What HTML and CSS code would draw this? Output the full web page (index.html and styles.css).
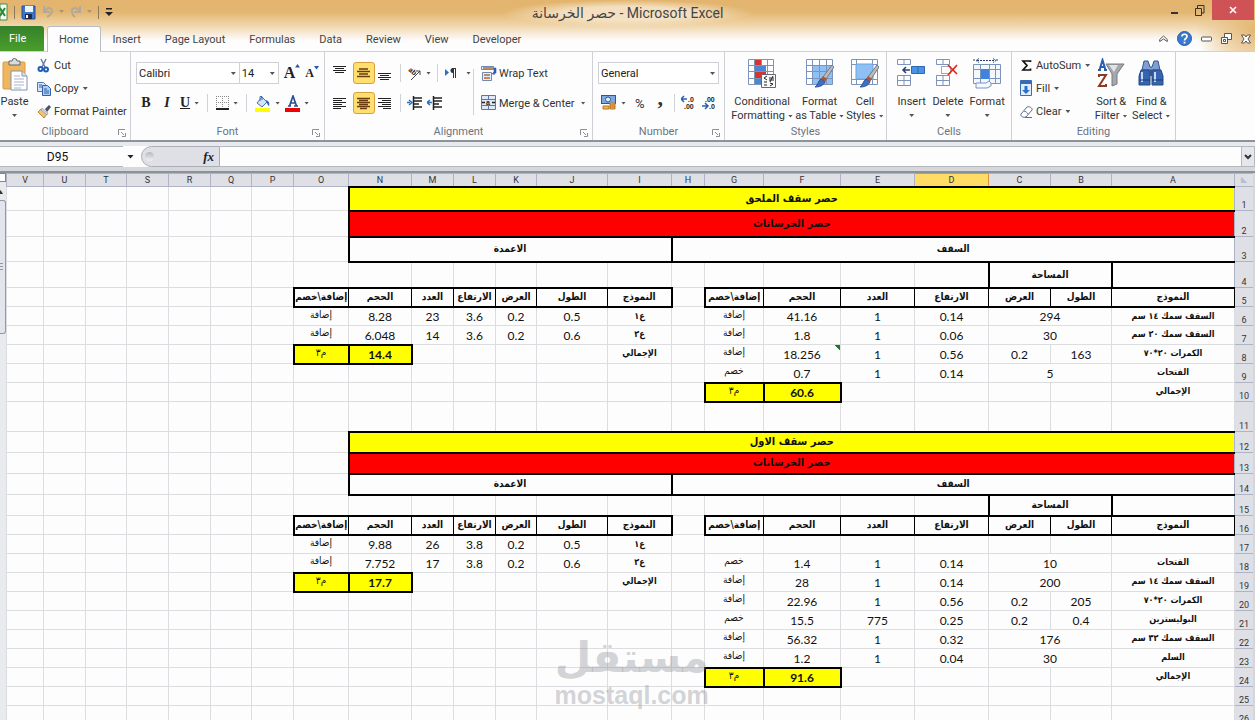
FILE: index.html
```html
<!DOCTYPE html>
<html lang="en">
<head>
<meta charset="utf-8">
<title>حصر الخرسانة - Microsoft Excel</title>
<link rel="stylesheet" href="styles.css">
</head>
<body>
<div class="app">
  <header class="titlebar">
    <div class="quick">
      <svg class="logo" width="8" height="18" viewBox="0 0 8 18"><path d="M0 1h7v16H0z" fill="#fff" stroke="#3f8f3c"/><path d="M0 5l5 8M5 5l-5 8" stroke="#2c8a33" stroke-width="2"/></svg>
      <i class="qsep"></i>
      <button class="qbtn" aria-label="Save"><svg width="15" height="15" viewBox="0 0 15 15"><path d="M1 1h13v13H2l-1-1z" fill="#3f73c4" stroke="#27509a"/><path d="M4 1h8v6H4z" fill="#eaf2fc"/><path d="M4 9h7v5H4z" fill="#1d2b46"/><path d="M5 10h2v3H5z" fill="#fff"/></svg></button>
      <button class="qbtn" aria-label="Undo"><svg width="22" height="14" viewBox="0 0 22 14"><path d="M2 1v6h6M3 6c3-5 8-3 7 1-1 3-3 4-5 5" fill="none" stroke="#b3a999" stroke-width="2"/><path d="M17 5h5l-2.500 3z" fill="#a79579"/></svg></button>
      <button class="qbtn" aria-label="Redo"><svg width="22" height="14" viewBox="0 0 22 14"><path d="M10 1v6H4M9 6C6 1 1 3 2 7c0 3 2 4 3 5" fill="none" stroke="#b3a999" stroke-width="2"/><path d="M17 5h5l-2.500 3z" fill="#a79579"/></svg></button>
      <i class="qsep"></i>
      <button class="qbtn" aria-label="Customize toolbar"><svg width="8" height="8" viewBox="0 0 8 8"><path d="M1 0h6v1.500H1zM0 4h8L4 8z" fill="#222"/></svg></button>
    </div>
    <h1 class="title"><bdi>حصر الخرسانة</bdi> - Microsoft Excel</h1>
    <div class="winbtns">
      <button aria-label="Minimize"><svg width="8" height="10" viewBox="0 0 8 10"><path d="M0 7h7v2H0z" fill="#333"/></svg></button>
      <button aria-label="Restore"><svg width="10" height="11" viewBox="0 0 10 11"><path d="M.5 3.500h6v7h-6zM2.500 3V.5h6.500v7.500H7" fill="none" stroke="#333"/></svg></button>
      <button class="close" aria-label="Close"><svg width="8" height="8" viewBox="0 0 8 8"><path d="M1 1l6 6M7 1L1 7" stroke="#fff" stroke-width="1.600"/></svg></button>
    </div>
  </header>

  <nav class="tabs">
    <button class="tab file">File</button>
    <button class="tab active">Home</button>
    <button class="tab">Insert</button>
    <button class="tab">Page Layout</button>
    <button class="tab">Formulas</button>
    <button class="tab">Data</button>
    <button class="tab">Review</button>
    <button class="tab">View</button>
    <button class="tab">Developer</button>
    <div class="docbtns">
      <button aria-label="Minimize ribbon"><svg width="9" height="8" viewBox="0 0 9 8"><path d="M.7 4.500L4.500 1l3.800 3.500v2L4.500 4 .7 6.500z" fill="#fff" stroke="#555"/></svg></button>
      <button aria-label="Help"><svg width="15" height="17" viewBox="0 0 15 17"><circle cx="7.500" cy="8.500" r="7" fill="#3879cf" stroke="#2a5ba8"/><path d="M5 6.500c0-3 5-3 5 0 0 2-2.500 2-2.500 4" fill="none" stroke="#fff" stroke-width="1.700"/><path d="M6.600 11.700h1.800v1.800H6.600z" fill="#fff"/></svg></button>
      <button aria-label="Minimize workbook"><svg width="11" height="6" viewBox="0 0 11 6"><rect x=".5" y="1" width="10" height="4" rx="1" fill="#fff" stroke="#555"/></svg></button>
      <button aria-label="Restore workbook"><svg width="11" height="11" viewBox="0 0 11 11"><path d="M3.500.5h7v6h-7z" fill="#fff" stroke="#555"/><path d="M.5 4.500h6v6h-6z" fill="#fff" stroke="#555"/><path d="M2.500 6.500h2v2h-2z" fill="#fff" stroke="#555"/></svg></button>
      <button aria-label="Close workbook"><svg width="10" height="10" viewBox="0 0 10 10"><path d="M.5 1h3L5 3l1.500-2h3L7 5l2.500 4h-3L5 7 3.500 9h-3L3 5z" fill="#fff" stroke="#555"/></svg></button>
    </div>
  </nav>

  <section class="ribbon">
    <div class="group clipboard">
      <div class="body">
        <button class="big paste"><svg width="26" height="33" viewBox="0 0 26 33"><rect x="1" y="4" width="22" height="27" rx="1" fill="#efb660" stroke="#d79a43"/><path d="M7 3h3a2.500 2.500 0 0 1 5 0h3v4H7z" fill="#d9dbde" stroke="#666"/><path d="M9 13h11l5 5v14H9z" fill="#fff" stroke="#7f93b4"/><path d="M20 13v5h5" fill="#dbe4f1" stroke="#7f93b4"/><path d="M12 18h6M12 21h10M12 24h10M12 27h10M12 30h7" stroke="#a7b4ca"/></svg><span>Paste</span><i class="dd"></i></button>
        <div class="stack">
          <button><svg width="14" height="15" viewBox="0 0 14 15"><path d="M4 1l4 8M9 1L5 9" stroke="#6d7f9c" stroke-width="1.500"/><circle cx="3.500" cy="11" r="2" fill="none" stroke="#1f5eb5" stroke-width="2"/><circle cx="9" cy="11.500" r="2" fill="none" stroke="#1f5eb5" stroke-width="2"/></svg>Cut</button>
          <button><svg width="14" height="15" viewBox="0 0 14 15"><path d="M.5 1.500h6l2 2v7h-8z" fill="#d5e5fa" stroke="#4b79b9"/><path d="M5.500 4.500h5l3 3v7h-8z" fill="#aecdf3" stroke="#2f61a8"/><path d="M7 8h3M7 10h5M7 12h5M2 4h3M2 6h3" stroke="#2f61a8"/></svg>Copy<i class="dd"></i></button>
          <button><svg width="14" height="15" viewBox="0 0 14 15"><path d="M8 5l4-4 2 2-4 5z" fill="#47536b"/><path d="M4 5l6 5-3 4-6-6z" fill="#f0c477" stroke="#bd8a35"/><path d="M5 4l6 5-1 2-6-5z" fill="#cfd3da" stroke="#7d818a" stroke-width=".5"/></svg>Format Painter</button>
        </div>
      </div>
      <div class="label">Clipboard<svg class="launch" width="8" height="8" viewBox="0 0 8 8"><path d="M.5 6V.5H7M3 3l3 3M7.500 4v3.500H4" fill="none" stroke="#8a8f98"/></svg></div>
    </div>

    <div class="group font">
      <div class="body rows">
        <div class="row">
          <label class="pick face"><select aria-label="Font"><option>Calibri</option></select><i class="dd"></i></label><label class="pick size"><select aria-label="Font size"><option>14</option></select><i class="dd"></i></label>
          <button class="serif grow" aria-label="Grow font">A<svg width="5" height="4" viewBox="0 0 5 4"><path d="M0 3.500L2.500 0 5 3.500z" fill="#2a56a5"/></svg></button>
          <button class="serif shrink" aria-label="Shrink font">A<svg width="5" height="4" viewBox="0 0 5 4"><path d="M0 0h5L2.500 3.500z" fill="#2a56a5"/></svg></button>
        </div>
        <div class="row second">
          <button class="serif glyph"><b>B</b></button>
          <button class="serif glyph"><b><em>I</em></b></button>
          <button class="serif glyph"><b><u>U</u></b><i class="dd"></i></button>
          <i class="vsep"></i>
          <button class="ic" aria-label="Borders"><svg width="13" height="14" viewBox="0 0 13 14"><path d="M.5 0v12M6.500 0v12M12.500 0v12M0 .5h13M0 6.500h13" stroke="#888" stroke-dasharray="1 1"/><path d="M0 13h13" stroke="#222" stroke-width="2"/></svg><i class="dd"></i></button>
          <i class="vsep"></i>
          <button class="ic" aria-label="Fill color"><svg width="16" height="17" viewBox="0 0 16 17"><path d="M7 2l5 5-5 5-5-4z" fill="#d4e3f7" stroke="#466fab"/><path d="M5 6V1.500h2V5" fill="none" stroke="#466fab"/><path d="M11 5c3 1 4 3 3 6-2-1-1-3-3-3z" fill="#2d66b8"/><path d="M0 13h15v4H0z" fill="#ff0"/></svg><i class="dd"></i></button>
          <button class="ic" aria-label="Font color"><svg width="15" height="17" viewBox="0 0 15 17"><path d="M3 11h3M9 11h4M4.500 11L8 1l3.500 10M5.500 8h5" fill="none" stroke="#2d4f8f" stroke-width="1.700"/><path d="M0 13h15v4H0z" fill="#f00000"/></svg><i class="dd"></i></button>
        </div>
      </div>
      <div class="label">Font<svg class="launch" width="8" height="8" viewBox="0 0 8 8"><path d="M.5 6V.5H7M3 3l3 3M7.500 4v3.500H4" fill="none" stroke="#8a8f98"/></svg></div>
    </div>

    <div class="group align">
      <div class="body cols">
        <div class="rows">
          <div class="row">
            <button class="sq" aria-label="Top align"><svg width="14" height="16" viewBox="0 0 14 16"><path d="M0 1.500h13M2 3.500h9M0 5.500h13M2 7.500h9" stroke="#222"/></svg></button>
            <button class="sq on" aria-label="Middle align"><svg width="14" height="12" viewBox="0 0 14 12"><path d="M2 2h9M0 4.500h13M2 7h9M0 9.500h13" stroke="#6b3c10" stroke-width="1.500"/></svg></button>
            <button class="sq" aria-label="Bottom align"><svg width="14" height="16" viewBox="0 0 14 16"><path d="M0 8.500h13M2 10.500h9M0 12.500h13M2 14.500h9" stroke="#222"/></svg></button>
            <i class="vsep"></i>
            <button class="ic" aria-label="Orientation"><svg width="15" height="15" viewBox="0 0 15 15"><text x="0" y="7" class="tiny" transform="rotate(40 4 7)">ab</text><path d="M4 14l9-9M13 5v4M13 5H9" stroke="#444" fill="none"/></svg><i class="dd"></i></button>
            <i class="vsep"></i>
            <button class="ic" aria-label="Text direction"><svg width="14" height="12" viewBox="0 0 14 12"><path d="M1 2v7l4-3.500z" fill="#2c6dc4"/><path d="M9 1a2.200 2.200 0 0 0 0 5z" fill="#333"/><path d="M12 1.500H8.500M9.500 1v10M11.500 1v10" stroke="#333" fill="none"/></svg><i class="dd wide"></i></button>
          </div>
          <div class="row second">
            <button class="sq" aria-label="Align left"><svg width="14" height="13" viewBox="0 0 14 13"><path d="M0 1.500h13M0 3.500h9M0 5.500h13M0 7.500h9M0 9.500h13M0 11.500h8" stroke="#222"/></svg></button>
            <button class="sq on" aria-label="Center"><svg width="14" height="13" viewBox="0 0 14 13"><path d="M0 1.500h13M2 3.500h9M0 5.500h13M2 7.500h9M0 9.500h13M3 11.500h7" stroke="#6b3c10" stroke-width="1.300"/></svg></button>
            <button class="sq" aria-label="Align right"><svg width="14" height="13" viewBox="0 0 14 13"><path d="M0 1.500h13M4 3.500h9M0 5.500h13M4 7.500h9M0 9.500h13M5 11.500h8" stroke="#222"/></svg></button>
            <i class="vsep"></i>
            <button class="ic" aria-label="Decrease indent"><svg width="15" height="14" viewBox="0 0 15 14"><path d="M6 2h9M7 5h8M7 8h5M6 11h9M6.500 0v14" stroke="#222" stroke-width="1.500"/><path d="M0 6.500h3M2 4l3 2.500L2 9" fill="none" stroke="#2c6dc4" stroke-width="1.500"/></svg></button>
            <button class="ic" aria-label="Increase indent"><svg width="15" height="14" viewBox="0 0 15 14"><path d="M6 2h9M7 5h8M7 8h5M6 11h9M6.500 0v14" stroke="#222" stroke-width="1.500"/><path d="M5 6.500H1M3 4L0 6.500 3 9" fill="none" stroke="#2c6dc4" stroke-width="1.500"/></svg></button>
          </div>
        </div>
        <i class="vsep tall"></i>
        <div class="rows">
          <div class="row"><button class="txt"><svg width="16" height="16" viewBox="0 0 16 16"><path d="M.5 1.500h12v3H.5zM1.500 7.500h9v8h-9z" fill="#e6eefb" stroke="#7088b4"/><path d="M2 3h10M3 10h6M3 13h6" stroke="#b36b2c" stroke-width="1.500"/><path d="M13 3h2v5l-4 1 2-2v3z" fill="#2c5fae" stroke="#2c5fae" stroke-width=".6"/></svg>Wrap Text</button></div>
          <div class="row second"><button class="txt"><svg width="16" height="16" viewBox="0 0 16 16"><path d="M.5.500h14v14H.5zM.5 4.500h14M.5 10.500h14M7.500 0v4M7.500 11v4" fill="#dfe9f8" stroke="#5d76a6"/><path d="M1 7.500h3M11 7.500h3" stroke="#222" stroke-width="1.500"/><text x="5" y="10" class="tiny">a</text></svg>Merge &amp; Center<i class="dd"></i></button></div>
        </div>
      </div>
      <div class="label">Alignment<svg class="launch" width="8" height="8" viewBox="0 0 8 8"><path d="M.5 6V.5H7M3 3l3 3M7.500 4v3.500H4" fill="none" stroke="#8a8f98"/></svg></div>
    </div>

    <div class="group number">
      <div class="body rows">
        <div class="row"><label class="pick fmt"><select aria-label="Number format"><option>General</option></select><i class="dd"></i></label></div>
        <div class="row second">
          <button class="ic" aria-label="Accounting format"><svg width="16" height="16" viewBox="0 0 16 16"><rect x=".5" y=".5" width="14" height="8" fill="#7ea8e0" stroke="#2b57a0"/><circle cx="7" cy="4.500" r="2.500" fill="#e3eefb" stroke="#2b57a0"/><path d="M9 8h5v6H9zM2 11h6v3H2z" fill="#eeb45b" stroke="#b97722"/><path d="M9 10h5M9 12h5" stroke="#b97722"/></svg><i class="dd"></i></button>
          <button class="pct">%</button>
          <button class="comma">,</button>
          <i class="vsep"></i>
          <button class="dec" aria-label="Increase decimal"><svg width="15" height="18" viewBox="0 0 15 18"><path d="M6 5H1M3 2L0 5l3 3" stroke="#2c5fae" stroke-width="1.500" fill="none"/><text x="7" y="8" class="tiny">.0</text><text x="3" y="15" class="tiny">.00</text></svg></button>
          <button class="dec" aria-label="Decrease decimal"><svg width="15" height="18" viewBox="0 0 15 18"><path d="M0 12h5M3 9l3 3-3 3" stroke="#2c5fae" stroke-width="1.500" fill="none"/><text x="3" y="8" class="tiny">.00</text><text x="7" y="15" class="tiny">.0</text></svg></button>
        </div>
      </div>
      <div class="label">Number<svg class="launch" width="8" height="8" viewBox="0 0 8 8"><path d="M.5 6V.5H7M3 3l3 3M7.500 4v3.500H4" fill="none" stroke="#8a8f98"/></svg></div>
    </div>

    <div class="group styles">
      <div class="body bigs">
        <button class="big"><svg width="28" height="31" viewBox="0 0 28 31"><path d="M.5 1.500h25v25H.5zM.5 7.500h25M.5 13.500h25M.5 20.500h25M6.500 1v25M13.500 1v25M19.500 1v25" fill="#fff" stroke="#7c93bd"/><path d="M7 2h6v5H7zM7 14h11v6H7z" fill="#d8342b"/><path d="M7 8h11v5H7zM7 21h6v5H7z" fill="#4b86d2"/><path d="M13.500 16.500h14v13h-14z" fill="#fafafa" stroke="#667"/><path d="M19 18l-3 2 3 2M16 24h3M21 20h5M21 22h5M25 18l-3 6M22 25l3 1-3 2M16 27h3" fill="none" stroke="#222"/></svg><span>Conditional<br>Formatting<i class="dd"></i></span></button>
        <button class="big"><svg width="29" height="31" viewBox="0 0 29 31"><path d="M1.500 1.500h26v25h-26z" fill="#fff"/><path d="M8 8h19v18H8z" fill="#8fc0f3"/><path d="M1.500 1.500h26v25h-26zM1.500 7.500h26M1.500 13.500h26M1.500 20.500h26M7.500 1v25M14.500 1v25M21.500 1v25" fill="none" stroke="#7c93bd"/><path d="M27 7l2 2-8 12-3-2z" fill="#b9bcc3" stroke="#777"/><path d="M18 18l4 3-2 3-4-3z" fill="#b5562a"/><path d="M16 21l4 3c-2 4-6 5-10 5 3-2 3-6 6-8z" fill="#3f6fc0" stroke="#2f559c"/></svg><span>Format<br>as Table<i class="dd"></i></span></button>
        <button class="big"><svg width="29" height="31" viewBox="0 0 29 31"><path d="M1.500 1.500h26v25h-26zM1.500 6.500h26M1.500 21.500h26M6.500 1v25M22.500 1v25" fill="#fff" stroke="#7c93bd"/><path d="M6 6h17v15H6z" fill="#8fc0f3" stroke="#6ba3e2"/><path d="M27 7l2 2-8 12-3-2z" fill="#b9bcc3" stroke="#777"/><path d="M18 18l4 3-2 3-4-3z" fill="#b5562a"/><path d="M16 21l4 3c-2 4-6 5-10 5 3-2 3-6 6-8z" fill="#3f6fc0" stroke="#2f559c"/></svg><span>Cell<br>Styles<i class="dd"></i></span></button>
      </div>
      <div class="label">Styles</div>
    </div>

    <div class="group cells">
      <div class="body bigs">
        <button class="big"><svg width="29" height="31" viewBox="0 0 29 31"><path d="M.5 1.500h13v5H.5zM7 1v5M.5 17.500h13v10H.5zM7 17v10M.5 22.500h13" fill="#fff" stroke="#7c93bd"/><path d="M14.500 8.500h13v7h-13zM21 8v7" fill="#4b93e4" stroke="#2f66b3"/><path d="M13 12H7M9 9l-3 3 3 3" fill="none" stroke="#27406d" stroke-width="1.500"/></svg><span>Insert</span><i class="dd"></i></button>
        <button class="big"><svg width="29" height="31" viewBox="0 0 29 31"><path d="M3.500 1.500h13v5h-13zM10 1v5M3.500 17.500h13v10h-13zM10 17v10M3.500 22.500h13" fill="#fff" stroke="#7c93bd"/><path d="M8.500 8.500h9v7h-9z" fill="none" stroke="#555" stroke-dasharray="1 1"/><path d="M15 7l9 9M24 7l-9 10" stroke="#e0271c" stroke-width="1.700"/></svg><span>Delete</span><i class="dd"></i></button>
        <button class="big"><svg width="29" height="31" viewBox="0 0 29 31"><path d="M1 1v3M24 1v3M4 2.500h18M6 .5L3 2.500l3 2M20 .5l3 2-3 2" fill="none" stroke="#27406d" stroke-dasharray="2 1"/><path d="M.5 6.500h27v19H.5zM.5 11.500h27M.5 20.500h27M7.500 6v19M16.500 6v19M22.500 6v19" fill="#f4f7fc" stroke="#7c93bd"/><path d="M8 11h8v10H8z" fill="#3f83dc"/><path d="M3 25h10l3-2 2 2v3l-4 2H3z" fill="#f4f7fc" stroke="#7c93bd"/></svg><span>Format</span><i class="dd"></i></button>
      </div>
      <div class="label">Cells</div>
    </div>

    <div class="group editing">
      <div class="body">
        <div class="stack">
          <button><svg width="13" height="15" viewBox="0 0 13 15"><path d="M10.500 4V3H3l4 4.500L3 12h7.500v-1.500" fill="none" stroke="#111" stroke-width="1.700"/></svg>AutoSum<i class="dd"></i></button>
          <button><svg width="13" height="17" viewBox="0 0 13 17"><path d="M.5.500h11v15H.5z" fill="#e2eefc" stroke="#3a6cb4"/><path d="M0 1h12v3H0z" fill="#3a6cb4"/><path d="M4.500 6h3v4H10l-4 4-4-4h2.500z" fill="#2a70cc"/></svg>Fill<i class="dd"></i></button>
          <button><svg width="13" height="14" viewBox="0 0 13 14"><path d="M1 9l6-7c2-1 6 1 5 3l-6 7c-3 1-6-1-5-3z" fill="#fff" stroke="#5b6b94"/><path d="M4 6c1 0 4 2 4 3M5 12.500h7" fill="none" stroke="#5b6b94"/></svg>Clear<i class="dd"></i></button>
        </div>
        <div class="pair">
          <button class="big"><svg width="28" height="31" viewBox="0 0 28 31"><path d="M1 12h3M7 12h3M2.500 12L5.500 2l3 10M3.500 9h4" fill="none" stroke="#2b5db0" stroke-width="2"/><path d="M2 19v-2h7L2 28h7v-2" fill="none" stroke="#8c3a22" stroke-width="2"/><path d="M9 6h18l-7 10v10l-5 2V16z" fill="#a5a8ad" stroke="#777b82"/><path d="M12 7h9l-4 7z" fill="#e1e3e6"/></svg><span>Sort &amp;<br>Filter<i class="dd"></i></span></button>
          <button class="big"><svg width="28" height="31" viewBox="0 0 28 31"><path d="M7 3h4l2 6h2l2-6h4l2 9H5z" fill="#7e9ed4" stroke="#33568f"/><path d="M4 12h8l1 6v9H2v-9zM16 12h8l2 6v9H15v-9z" fill="#3565b0" stroke="#274a86"/><path d="M5 14v10M18 14v10" stroke="#c5d8f5" stroke-width="2"/><path d="M12 12h4v6h-4z" fill="#33568f"/><path d="M2 22h11M15 22h11" stroke="#1f3a70"/></svg><span>Find &amp;<br>Select<i class="dd"></i></span></button>
        </div>
      </div>
      <div class="label">Editing</div>
    </div>
    <div class="group rest"></div>
  </section>

  <section class="formula">
    <input class="namebox" aria-label="Name box" value="D95">
    <i class="dd dark"></i>
    <div class="fxwrap"><i class="knob"></i><button class="fx"><em>f</em>x</button></div>
    <input class="fxinput" aria-label="Formula">
    <button class="expand" aria-label="Expand formula bar"><svg width="8" height="6" viewBox="0 0 8 6"><path d="M1 1l3 3 3-3" fill="none" stroke="#333" stroke-width="2"/></svg></button>
  </section>

  <main class="sheet">
    <div class="vscroll"><i class="split"></i><i class="up"></i><i class="thumb"></i></div>
    <div class="gridwrap">
      <table class="grid" id="grid"></table>
      <div class="mark"><b lang="ar">مستقل</b><span>mostaql.com</span></div>
    </div>
  </main>
</div>
<script src="grid.js"></script>
</body>
</html>
```
FILE: styles.css
```css
* { box-sizing: border-box; }
body { margin: 0; font-family: Roboto, "DejaVu Sans", sans-serif; font-size: 11px; color: #333; }
button { font: inherit; color: inherit; background: none; border: 0; padding: 0; display: flex; align-items: center; }
svg { display: block; flex: none; }
.app { height: 100vh; display: flex; flex-direction: column; overflow: hidden; background:
  radial-gradient(ellipse 60px 50px at 100% 30px, #e4b774 0, #e9c48c99 60%, #f3dcb800 100%) no-repeat,
  linear-gradient(#e2b46e 0, #e3b671 12px, #ebc78f 19px, #f1d9b3 27px, #f7e9d5 33px, #fdfdfd 41px); }

.titlebar { height: 26px; flex: none; display: grid; grid-template-columns: 1fr auto 1fr; align-items: start; }
.quick { display: flex; align-items: center; gap: 6px; height: 24px; }
.qsep { width: 1px; height: 13px; background: #8c7a5c; }
.title { margin: 0; padding: 0 30px; font-size: 14px; line-height: 27px; font-weight: 400; color: #444; background: radial-gradient(closest-side, #f6e6ccdd 50%, #f6e6cc00); }
.winbtns { display: flex; justify-content: flex-end; }
.winbtns button { width: 25px; height: 20px; justify-content: center; }
.winbtns .close { width: 42px; background: #cf5257; margin-right: 1px; }

.tabs { height: 26px; flex: none; display: flex; align-items: stretch; border-bottom: 1px solid #cfd1d5; padding-right: 4px; }
.tab { padding: 1px 12px 0; color: #444; }
.tab.file { width: 44px; padding: 0 0 0 9px; margin-right: 3px; color: #fff; background: linear-gradient(#35802a, #4a9e2c); border-radius: 0 3px 0 0; }
.tab.active { background: #fdfdfd; border: 1px solid #b9bdc4; border-bottom: 0; border-radius: 3px 3px 0 0; margin-bottom: -1px; padding: 0 11px; }
.docbtns { margin-left: auto; display: flex; gap: 9px; align-items: center; }

.ribbon { height: 90px; flex: none; display: flex; background: #fdfdfd; border-bottom: 2px solid #8d939b; }
.group { flex: none; display: flex; flex-direction: column; border-right: 1px solid #cdd0d5; color: #333; }
.body { flex: 1; display: flex; padding-top: 2px; }
.label { height: 16px; line-height: 16px; text-align: center; color: #6a7481; position: relative; }
.launch { position: absolute; right: 4px; top: 5px; }
.clipboard { width: 131px; }
.font { width: 194px; }
.align { width: 268px; }
.number { width: 132px; }
.styles { width: 162px; }
.cells { width: 125px; }
.editing { width: 164px; }
.rest { flex: 1; border: 0; }
.dd { flex: none; display: inline-block; width: 5px; height: 3px; margin-left: 4px; background: #555; clip-path: polygon(0 0, 100% 0, 50% 100%); vertical-align: middle; }
.dd.wide { margin-left: 8px; }
.dd.dark { background: #222; width: 7px; height: 4px; }

.big { flex-direction: column; line-height: 14px; text-align: center; padding-top: 4px; }
.big svg { margin-bottom: 6px; }
.big > .dd { margin: 5px 0 0; }
.big span .dd { margin-left: 3px; }
.paste { width: 29px; }
.paste svg { margin-bottom: 4px; }
.stack { display: flex; flex-direction: column; margin-left: 8px; }
.stack button { height: 23px; gap: 3px; white-space: nowrap; }
.stack .dd { margin-left: 1px; }
.bigs { justify-content: space-evenly; }
.styles .bigs, .cells .bigs { padding-left: 4px; }
.pair { display: flex; flex: 1; justify-content: space-evenly; }

.rows { display: flex; flex-direction: column; }
.body.rows { padding: 8px 5px 0; }
.row { height: 26px; display: flex; align-items: center; gap: 5px; }
.row.second { margin-top: 4px; gap: 6px; }
.pick { position: relative; display: flex; height: 22px; }
.pick select { appearance: none; width: 100%; border: 1px solid #cfd1d6; background: #fff; font: inherit; color: #222; padding: 0 2px; }
.pick .dd { position: absolute; right: 4px; top: 10px; }
.face { width: 104px; margin-right: -6px; }
.size { width: 40px; }
.fmt { width: 124px; }
.serif { font-family: "Liberation Serif", serif; font-weight: 700; color: #222; align-items: center; }
.grow { font-size: 16px; }
.shrink { font-size: 12px; }
.grow svg, .shrink svg { align-self: flex-start; }
.glyph { font-size: 14px; min-width: 16px; justify-content: center; }
.font .second { padding-left: 2px; gap: 5px; }
.vsep { width: 1px; height: 18px; background: #cfd2d7; flex: none; }
.font .vsep { margin: 0 3px; }
.cols { padding: 8px 6px 0; }
.align .vsep { margin: 0 1px; }
.align .vsep.tall { height: 46px; align-self: center; margin: 0 7px 0 2px; }
.align .row { gap: 5px; }
.sq { width: 18px; height: 22px; justify-content: center; }
.sq.on { width: 22px; margin: 0 -3px; background: #ffdf6e; border: 1px solid #d99f43; border-radius: 3px; }
.align .sq + .sq { margin-left: -1px; }
.txt { gap: 2px; white-space: nowrap; }
.tiny { font: 700 7px "Liberation Sans", sans-serif; fill: #222; }
.number .second { padding-left: 3px; }
.pct { font-size: 13px; margin: 0 3px; }
.comma { font: 700 22px "Liberation Serif", serif; height: 22px; line-height: 10px; padding-bottom: 10px; margin: 0 5px 0 4px; }

.formula { height: 31px; flex: none; display: flex; align-items: center; padding: 5px 0; background: linear-gradient(#e8e9ec 4px, #fdfdfd 4px 25px, #d6d8dc 25px); border-bottom: 2px solid #8b919b; }
.formula > * { height: 21px; }
.namebox { width: 123px; border: 0; border-block: 1px solid #b4b8bf; background: #fdfdfd; text-align: center; font: inherit; font-size: 12px; color: #111; padding: 1px 8px 0 0; }
.formula .dd.dark { height: 4px; margin: 0 7px 0 4px; }
.fxwrap { width: 79px; display: flex; align-items: center; justify-content: space-between; background: #dfe0e5; border: 1px solid #a9adb5; border-radius: 11px 0 0 11px; padding: 0 5px 0 3px; }
.knob { width: 9px; height: 9px; border-radius: 50%; background: linear-gradient(#b5b8bf, #f2f2f4); }
.fx { font: 700 13px "Liberation Serif", serif; font-style: italic; color: #222; }
.fxinput { flex: 1; min-width: 0; border: 0; border-block: 1px solid #b4b8bf; background: #fdfdfd; }
.expand { width: 14px; border: 1px solid #b4b8bf; background: #e6e7ea; justify-content: center; }

.sheet { flex: 1; min-height: 0; display: flex; background: #fdfdfd; border-right: 2px solid #d4d6db; overflow: hidden; }
.vscroll { width: 6px; flex: none; background: #e9eaee; display: flex; flex-direction: column; }
.split { height: 9px; border: 1px solid #7f858f; border-left: 0; background: #fff; }
.up { height: 4px; width: 5px; margin: 8px 0 6px -2px; background: #333; clip-path: polygon(50% 0, 100% 100%, 0 100%); }
.thumb { height: 134px; border: 1px solid #8f98ad; border-left: 0; border-radius: 0 3px 3px 0; background: linear-gradient(#8f98ad, #8f98ad) 0 62px / 3px 1px no-repeat, linear-gradient(#8f98ad, #8f98ad) 0 65px / 3px 1px no-repeat, linear-gradient(#8f98ad, #8f98ad) 0 68px / 3px 1px no-repeat, #e3e5ec; }
.gridwrap { flex: 1; min-width: 0; position: relative; }
.grid { width: 100%; table-layout: fixed; border-collapse: collapse; font-size: 12px; line-height: 14px; color: #111; }
.grid td { border: 1px solid #dcdde1; padding: 0; text-align: center; white-space: nowrap; }
.grid th { background: #dfe0e6; border: 1px solid #aeb3c6; padding: 0; font-size: 9px; line-height: 10px; font-weight: 400; color: #333; }
.grid tbody th { vertical-align: bottom; }
.grid thead th.sel { background: #ffdc65; border: 1px solid #d9963c; }
.grid thead th.corner { color: #b9bdc9; font-size: 8px; }
.grid .num { font-family: Lato, sans-serif; padding-top: 2px; }
.grid .ar { font-family: "DejaVu Sans Condensed", "DejaVu Sans", sans-serif; font-size: 10px; line-height: 14px; vertical-align: top; }
.grid .b { font-weight: 700; }
.grid .ar.b { font-size: 9px; padding-top: 1px; }
.grid .band { font-size: 10px; font-weight: 700; vertical-align: middle; border: 2px solid #000; border-right: 1px solid #aeb3c6; }
.grid .heading { font-size: 11px; }
.grid .yellow { background: #ff0; }
.grid .red { background: #f00; }
.grid td.half { border-right: 2px solid #000; }
.grid td.box { border: 2px solid #000; font-size: 10px; }
.grid td.head { font-weight: 700; border: 1px solid #000; border-block: 2px solid #000; vertical-align: middle; }
.grid td.first { border-left: 2px solid #000; }
.grid td.last { border-right: 2px solid #000; }
.grid td.total { background: #ff0; border: 2px solid #000; }
.grid .flag { background: linear-gradient(to bottom left, #1d7a2a 50%, transparent 50%) no-repeat top right / 6px 6px; }
.mark { position: absolute; left: 44%; top: 460px; width: 154px; display: flex; flex-direction: column; align-items: center; color: #8e919866; }
.mark b { font: 700 42px/49px "DejaVu Sans", sans-serif; }
.mark span { font: 700 25px/26px "Liberation Sans", sans-serif; }
```
FILE: grid.js
```js
// Sheet is right-to-left: column A sits beside the row numbers on the right.
const columns = [
  ["V", 37], ["U", 42], ["T", 41], ["S", 42], ["R", 42], ["Q", 41], ["P", 42],
  ["O", 55], ["N", 63], ["M", 42], ["L", 42], ["K", 41], ["J", 71], ["I", 64],
  ["H", 33], ["G", 59], ["F", 77], ["E", 74], ["D", 74], ["C", 62], ["B", 61], ["A", 123]
];
const ADD = "إضافة", CUT = "خصم", TOTAL = "الإجمالي", CUBIC = "م٣";

const band = (text, cls, span) => ({ text, cls: "band ar " + cls, span });
const head = (text, cls = "") => ({ text, cls: "head ar " + cls });
const n = (text) => ({ text, cls: "num" });
const ar = (text) => ({ text, cls: "ar" });
const arb = (text) => ({ text, cls: "ar b" });
const total = (text) => ({ text, cls: "total num b" });
const unit = { text: CUBIC, cls: "total ar" };

const titleRow = (t) => ({ N: band(t, "heading yellow", 14) });
const redRow = { N: band("حصر الخرسانات", "heading red", 14) };
const splitRow = { N: band("الاعمدة", "half", 6), H: band("السقف", "", 8) };
const areaRow = { C: band("المساحة", "box", 2), A: { text: "", cls: "band" } };
const headRow = {
  O: head("إضافة\\خصم", "first"), N: head("الحجم"), M: head("العدد"), L: head("الارتفاع"),
  K: head("العرض"), J: head("الطول"), I: head("النموذج", "last"),
  G: head("إضافة\\خصم", "first"), F: head("الحجم"), E: head("العدد"), D: head("الارتفاع"),
  C: head("العرض"), B: head("الطول"), A: head("النموذج")
};
const column = (vol, count, h, name) => ({
  O: ar(ADD), N: n(vol), M: n(count), L: n(h), K: n("0.2"), J: n(name === "ع١" ? "0.5" : "0.6"), I: arb(name)
});
const roof = (kind, vol, count, h, c, b, name) => {
  const r = { G: ar(kind), F: n(vol), E: n(count), D: n(h), A: arb(name) };
  if (b === null) r.C = { text: c, cls: "num", span: 2 };
  else { r.C = n(c); r.B = n(b); }
  return r;
};
const leftTotal = (v) => ({ O: unit, N: total(v), I: arb(TOTAL) });
const rightTotal = (v) => ({ G: unit, F: total(v), A: arb(TOTAL) });

const beams = roof(ADD, "18.256", "1", "0.56", "0.2", "163", "الكمرات ٢٠*٧٠");
beams.F.cls += " flag";

const rows = [
  [24, titleRow("حصر سقف الملحق")],
  [26, redRow],
  [25, splitRow],
  [26, areaRow],
  [19, headRow],
  [19, { ...column("8.28", "23", "3.6", "ع١"), ...roof(ADD, "41.16", "1", "0.14", "294", null, "السقف سمك ١٤ سم") }],
  [19, { ...column("6.048", "14", "3.6", "ع٢"), ...roof(ADD, "1.8", "1", "0.06", "30", null, "السقف سمك ٢٠ سم") }],
  [19, { ...leftTotal("14.4"), ...beams }],
  [19, roof(CUT, "0.7", "1", "0.14", "5", null, "الفتحات")],
  [19, rightTotal("60.6")],
  [30, {}],
  [21, titleRow("حصر سقف الاول")],
  [21, redRow],
  [21, splitRow],
  [21, areaRow],
  [19, headRow],
  [19, column("9.88", "26", "3.8", "ع١")],
  [19, { ...column("7.752", "17", "3.8", "ع٢"), ...roof(CUT, "1.4", "1", "0.14", "10", null, "الفتحات") }],
  [19, { ...leftTotal("17.7"), ...roof(ADD, "28", "1", "0.14", "200", null, "السقف سمك ١٤ سم") }],
  [19, roof(ADD, "22.96", "1", "0.56", "0.2", "205", "الكمرات ٢٠*٧٠")],
  [19, roof(CUT, "15.5", "775", "0.25", "0.2", "0.4", "البوليسترين")],
  [19, roof(ADD, "56.32", "1", "0.32", "176", null, "السقف سمك ٣٢ سم")],
  [19, roof(ADD, "1.2", "1", "0.04", "30", null, "السلم")],
  [19, rightTotal("91.6")],
  [19, {}],
  [19, {}]
];

const cols = columns.map(([, w]) => `<col style="width:${w}px">`).join("") + '<col style="width:19px">';
const letters = columns.map(([c]) => `<th scope="col"${c === "D" ? ' class="sel"' : ""}>${c}</th>`).join("");
const body = rows.map(([h, cells], i) => {
  let out = "", skip = 0;
  for (const [c] of columns) {
    if (skip) { skip--; continue; }
    const cell = cells[c];
    if (!cell) { out += "<td></td>"; continue; }
    const span = cell.span || 1;
    const dir = cell.cls.includes("ar") ? ' dir="rtl"' : "";
    out += `<td class="${cell.cls}" colspan="${span}"${dir}>${cell.text}</td>`;
    skip = span - 1;
  }
  return `<tr style="height:${h}px">${out}<th scope="row">${i + 1}</th></tr>`;
}).join("");
document.getElementById("grid").innerHTML =
  `<colgroup>${cols}</colgroup><thead><tr style="height:13px">${letters}<th class="corner">◣</th></tr></thead><tbody>${body}</tbody>`;
```
